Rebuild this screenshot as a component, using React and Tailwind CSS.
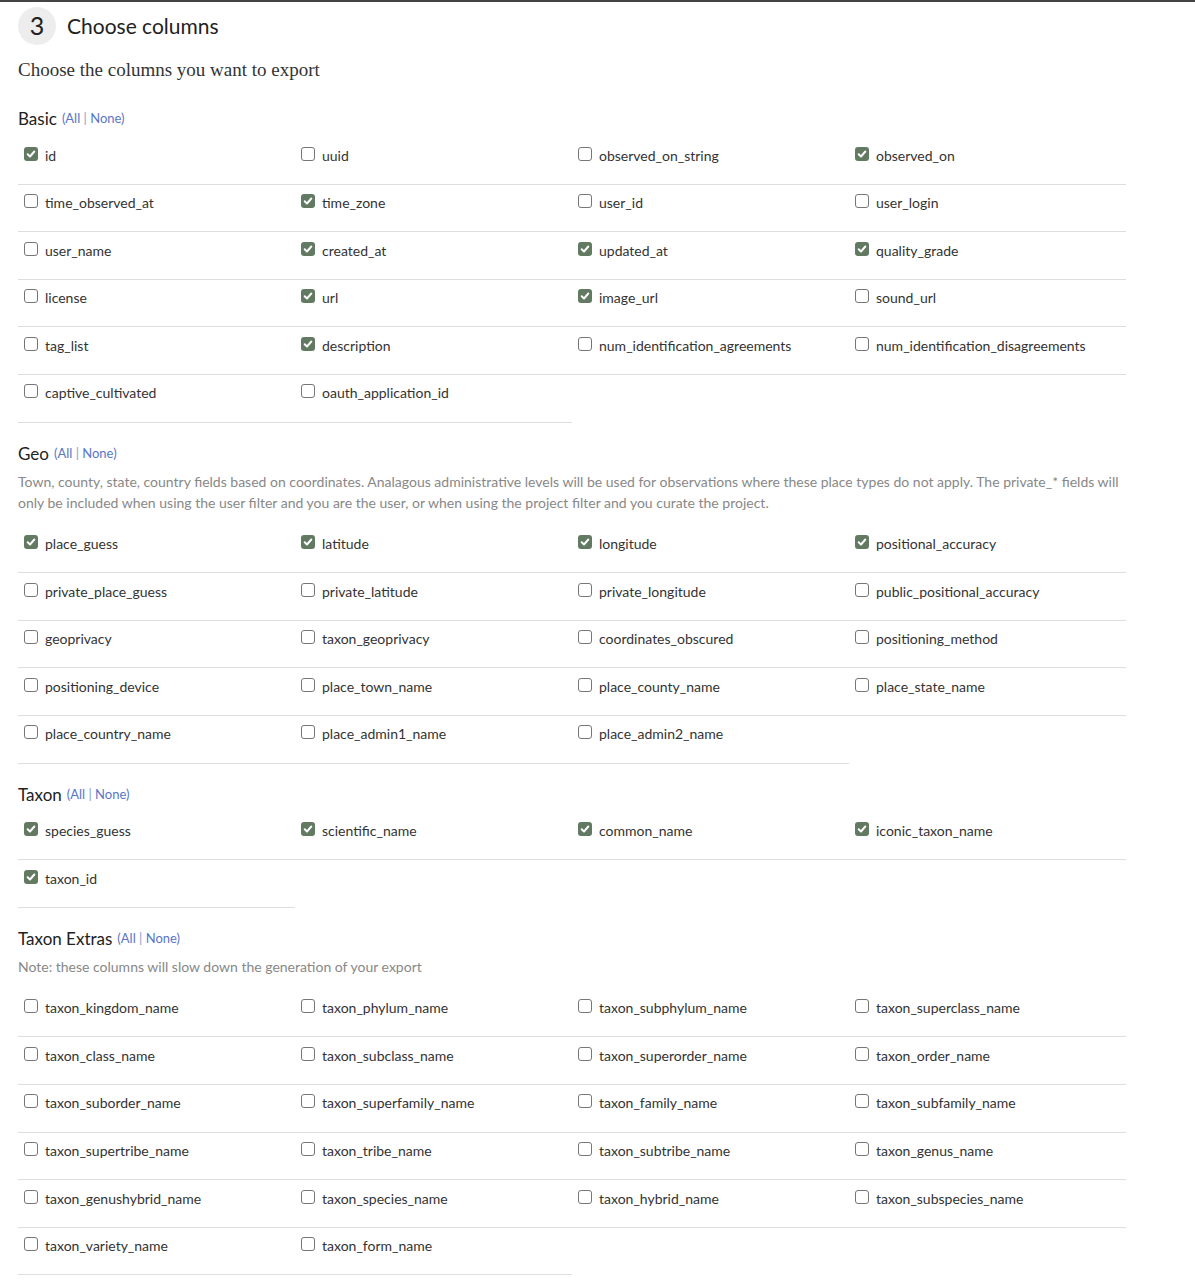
import React, { useState } from "react";

const SECTIONS = [
  {
    title: "Basic",
    fields: [
      ["id", true], ["uuid", false], ["observed_on_string", false], ["observed_on", true],
      ["time_observed_at", false], ["time_zone", true], ["user_id", false], ["user_login", false],
      ["user_name", false], ["created_at", true], ["updated_at", true], ["quality_grade", true],
      ["license", false], ["url", true], ["image_url", true], ["sound_url", false],
      ["tag_list", false], ["description", true], ["num_identification_agreements", false], ["num_identification_disagreements", false],
      ["captive_cultivated", false], ["oauth_application_id", false],
    ],
  },
  {
    title: "Geo",
    note: "Town, county, state, country fields based on coordinates. Analagous administrative levels will be used for observations where these place types do not apply. The private_* fields will only be included when using the user filter and you are the user, or when using the project filter and you curate the project.",
    fields: [
      ["place_guess", true], ["latitude", true], ["longitude", true], ["positional_accuracy", true],
      ["private_place_guess", false], ["private_latitude", false], ["private_longitude", false], ["public_positional_accuracy", false],
      ["geoprivacy", false], ["taxon_geoprivacy", false], ["coordinates_obscured", false], ["positioning_method", false],
      ["positioning_device", false], ["place_town_name", false], ["place_county_name", false], ["place_state_name", false],
      ["place_country_name", false], ["place_admin1_name", false], ["place_admin2_name", false],
    ],
  },
  {
    title: "Taxon",
    fields: [
      ["species_guess", true], ["scientific_name", true], ["common_name", true], ["iconic_taxon_name", true],
      ["taxon_id", true],
    ],
  },
  {
    title: "Taxon Extras",
    note: "Note: these columns will slow down the generation of your export",
    fields: [
      "taxon_kingdom_name", "taxon_phylum_name", "taxon_subphylum_name", "taxon_superclass_name",
      "taxon_class_name", "taxon_subclass_name", "taxon_superorder_name", "taxon_order_name",
      "taxon_suborder_name", "taxon_superfamily_name", "taxon_family_name", "taxon_subfamily_name",
      "taxon_supertribe_name", "taxon_tribe_name", "taxon_subtribe_name", "taxon_genus_name",
      "taxon_genushybrid_name", "taxon_species_name", "taxon_hybrid_name", "taxon_subspecies_name",
      "taxon_variety_name", "taxon_form_name",
    ].map((f) => [f, false]),
  },
];

function Check({ checked, onClick }) {
  return (
    <span
      onClick={onClick}
      className={
        checked
          ? "mt-[1px] flex h-[14px] w-[14px] shrink-0 items-center justify-center rounded-[3px] bg-[#627a62]"
          : "mt-[1px] h-[14px] w-[14px] shrink-0 rounded-[3px] border border-[#767676] bg-white"
      }
    >
      {checked && (
        <svg viewBox="0 0 12 12" className="h-[10px] w-[10px]">
          <path d="M2 6.3 L4.8 9 L10 3" fill="none" stroke="white" strokeWidth="2.3" strokeLinecap="round" strokeLinejoin="round" />
        </svg>
      )}
    </span>
  );
}

function Section({ section, first }) {
  const [vals, setVals] = useState(section.fields.map((f) => f[1]));
  const toggle = (i) => setVals(vals.map((v, j) => (j === i ? !v : v)));

  return (
    <div className={first ? "" : "mt-[19px]"}>
      <div className="flex h-[24px] items-center text-[17px] text-[#222]">
        {section.title}
        <span className="ml-[5px] text-[13px] text-[#5a76c8]">
          (All <span className="text-[#8a9bcf]">|</span> None)
        </span>
      </div>
      {section.note && (
        <p className="mt-[5px] text-[14px] leading-[21px] text-[#888]">{section.note}</p>
      )}
      <div className={section.note ? "mt-[13px] grid w-[1108px] grid-cols-4" : "mt-[6px] grid w-[1108px] grid-cols-4"}>
        {section.fields.map((f, i) => (
          <label
            key={f[0]}
            className="flex h-[47.6px] cursor-pointer items-start gap-[7px] border-b border-[#dedede] pl-[6px] pt-[8.5px]"
          >
            <Check checked={vals[i]} onClick={() => toggle(i)} />
            <span className="text-[14px] leading-[20px] text-[#333]">{f[0]}</span>
          </label>
        ))}
      </div>
    </div>
  );
}

export default function App() {
  return (
    <div className="min-h-[1282px] border-t-2 border-[#444] bg-white font-['Lato','Liberation_Sans',sans-serif]">
      <div className="w-[1126px] pl-[18px]">
        <div className="flex h-[46px] items-center pt-[2px]">
          <div className="flex h-[38px] w-[38px] items-center justify-center rounded-full bg-[#ededed] text-[25px] text-[#222]">
            3
          </div>
          <h2 className="ml-[11px] text-[21px] text-[#222]">Choose columns</h2>
        </div>
        <p className="mt-[8px] font-['Liberation_Serif','DejaVu_Serif',serif] text-[19px] leading-[27px] text-[#333]">
          Choose the columns you want to export
        </p>
        <div className="mt-[24px]">
          {SECTIONS.map((s, i) => (
            <Section key={s.title} section={s} first={i === 0} />
          ))}
        </div>
      </div>
    </div>
  );
}
